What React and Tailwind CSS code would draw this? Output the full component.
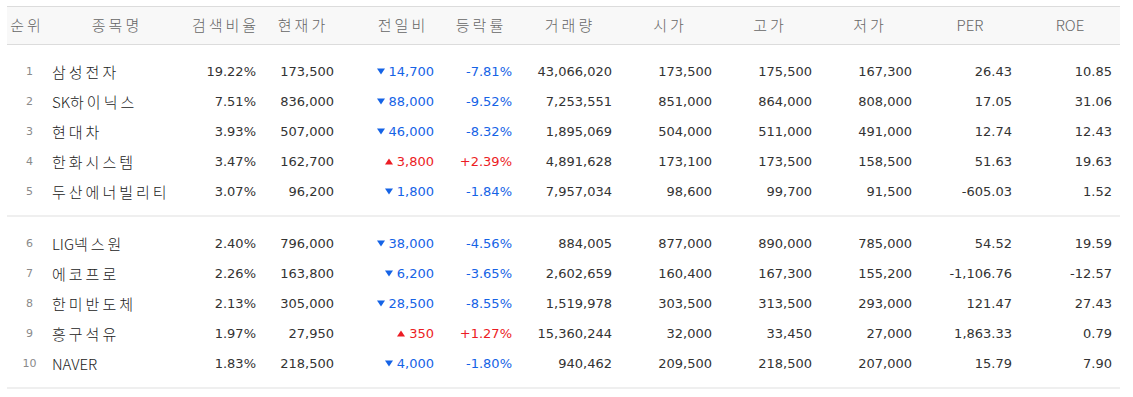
import React from 'react';

const HEAD = ['순위', '종목명', '검색비율', '현재가', '전일비', '등락률', '거래량', '시가', '고가', '저가', 'PER', 'ROE'];

const GROUPS = [
    [
        [1, '삼성전자', '19.22%', '173,500', 'down', '14,700', '-7.81%', '43,066,020', '173,500', '175,500', '167,300', '26.43', '10.85'],
        [2, 'SK하이닉스', '7.51%', '836,000', 'down', '88,000', '-9.52%', '7,253,551', '851,000', '864,000', '808,000', '17.05', '31.06'],
        [3, '현대차', '3.93%', '507,000', 'down', '46,000', '-8.32%', '1,895,069', '504,000', '511,000', '491,000', '12.74', '12.43'],
        [4, '한화시스템', '3.47%', '162,700', 'up', '3,800', '+2.39%', '4,891,628', '173,100', '173,500', '158,500', '51.63', '19.63'],
        [5, '두산에너빌리티', '3.07%', '96,200', 'down', '1,800', '-1.84%', '7,957,034', '98,600', '99,700', '91,500', '-605.03', '1.52'],
    ],
    [
        [6, 'LIG넥스원', '2.40%', '796,000', 'down', '38,000', '-4.56%', '884,005', '877,000', '890,000', '785,000', '54.52', '19.59'],
        [7, '에코프로', '2.26%', '163,800', 'down', '6,200', '-3.65%', '2,602,659', '160,400', '167,300', '155,200', '-1,106.76', '-12.57'],
        [8, '한미반도체', '2.13%', '305,000', 'down', '28,500', '-8.55%', '1,519,978', '303,500', '313,500', '293,000', '121.47', '27.43'],
        [9, '흥구석유', '1.97%', '27,950', 'up', '350', '+1.27%', '15,360,244', '32,000', '33,450', '27,000', '1,863.33', '0.79'],
        [10, 'NAVER', '1.83%', '218,500', 'down', '4,000', '-1.80%', '940,462', '209,500', '218,500', '207,000', '15.79', '7.90'],
    ],
];

const COLS = 'grid grid-cols-[40px_140px_77px_78px_100px_78px_100px_100px_100px_100px_100px_100px]';
const KR = { fontFamily: '"Noto Sans CJK KR", "DejaVu Sans", sans-serif' };

// hangul gets wide spacing, latin letters stay tight
const Spaced = ({ text, gap }) =>
    text.split(/([A-Za-z]+)/).filter(Boolean).map((part, i) =>
        /[A-Za-z]/.test(part)
            ? <span key={i} className="tracking-normal">{part}</span>
            : <span key={i} className={gap}>{part}</span>
    );

const Tri = ({ dir }) => (
    <svg width="8" height="7" viewBox="0 0 8 7" className="mr-[4px] mb-[1px]">
        {dir === 'down'
            ? <path d="M0 0.5h8L4 6.5z" fill="#1563e6" />
            : <path d="M0 6.5h8L4 0.5z" fill="#ec1c24" />}
    </svg>
);

const Row = ({ r }) => {
    const [rank, name, ratio, price, dir, diff, rate, vol, open, high, low, per, roe] = r;
    const tone = dir === 'up' ? 'text-[#ec1c24]' : 'text-[#1563e6]';
    const num = 'flex items-center justify-end pr-[8px]';
    return (
        <div className={`${COLS} h-[30px] items-center text-[13px] text-[#333]`}>
            <div className="text-center pl-[5px] text-[11px] text-[#8a8a8a]">{rank}</div>
            <div className="pl-[5px] text-[15px] font-light text-[#222]" style={KR}>
                <Spaced text={name} gap="tracking-[3px]" />
            </div>
            <div className={num}>{ratio}</div>
            <div className={num}>{price}</div>
            <div className={`${num} ${tone}`}><Tri dir={dir} />{diff}</div>
            <div className={`${num} ${tone}`}>{rate}</div>
            <div className={num}>{vol}</div>
            <div className={num}>{open}</div>
            <div className={num}>{high}</div>
            <div className={num}>{low}</div>
            <div className={num}>{per}</div>
            <div className={num}>{roe}</div>
        </div>
    );
};

const App = () => {
    return (
        <div className="w-[1133px] h-[397px] bg-white pt-[6px] pl-[7px]" style={{ fontFamily: '"DejaVu Sans", "Noto Sans CJK KR", sans-serif' }}>
            <div className="w-[1113px]">
                {/* header */}
                <div className={`${COLS} h-[39px] items-center bg-[#f8f8f8] border-y border-[#dcdcdc] text-[15px] font-light text-[#666]`} style={KR}>
                    {HEAD.map((h, i) => (
                        <div key={h} className={`text-center ${i === 4 ? 'pl-[22px]' : ''}`}>
                            <Spaced text={h} gap="tracking-[3px]" />
                        </div>
                    ))}
                </div>

                {GROUPS.map((g, gi) => (
                    <div key={gi} className="pt-[12px] pb-[8px] border-b-2 border-[#efefef]">
                        {g.map((r) => <Row key={r[0]} r={r} />)}
                    </div>
                ))}
            </div>
        </div>
    );
};

export default App;
